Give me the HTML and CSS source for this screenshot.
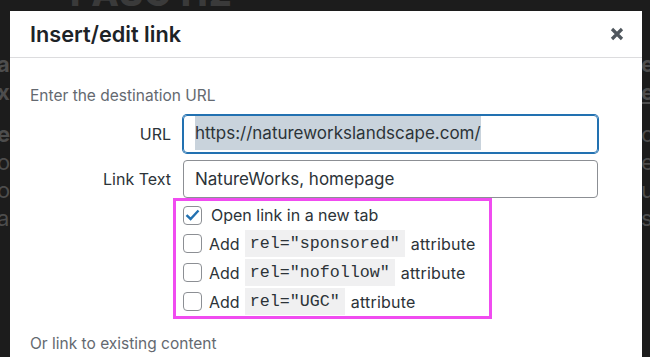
FILE: index.html
```html
<!DOCTYPE html>
<html lang="en">
<head>
  <meta charset="UTF-8">
  <meta name="viewport" content="width=device-width, initial-scale=1.0">
  <title>Insert/edit link</title>
  <link rel="stylesheet" href="styles.css">
</head>
<body>
  <!-- page behind the modal, dimmed -->
  <div class="backdrop">
    <div class="bg-top"><div class="bg-heading">PASC H2</div></div>
    <div class="bg-left">
      <span class="bold">a</span>
      <span class="bold">xt</span>
      <span class="bold gap">e</span>
      <span>o</span>
      <span>o</span>
      <span>a</span>
    </div>
    <div class="bg-right">
      <span class="bold">e</span>
      <span class="bold under">e</span>
      <span class="gap">o</span>
      <span>el</span>
      <span>ui</span>
      <span>s</span>
    </div>
  </div>

  <div class="dialog">
    <div class="dialog-header">
      <h1>Insert/edit link</h1>
      <button class="close" aria-label="Close">
        <svg width="14" height="14" viewBox="0 0 14 14"><path d="M2 2 L12 12 M12 2 L2 12" stroke="#50575e" stroke-width="3.2" stroke-linecap="butt"/></svg>
      </button>
    </div>
    <div class="dialog-body">
      <p class="howto">Enter the destination URL</p>
      <div class="link-form">
        <label class="field-label">URL</label>
        <div class="field focused"><span class="selected">https://natureworkslandscape.com/</span></div>
        <label class="field-label">Link Text</label>
        <div class="field">NatureWorks, homepage</div>
      </div>
      <div class="link-options">
        <div class="option">
          <span class="checkbox checked">
            <svg width="15" height="12" viewBox="0 0 15 12"><path d="M1.5 6.2 L5.6 10 L13.5 1.5" fill="none" stroke="#2271b1" stroke-width="2.4"/></svg>
          </span>
          <span class="option-text first">Open link in a new tab</span>
        </div>
        <div class="option">
          <span class="checkbox"></span>
          <span class="option-text">Add</span><code>rel="sponsored"</code><span class="option-text">attribute</span>
        </div>
        <div class="option">
          <span class="checkbox"></span>
          <span class="option-text">Add</span><code>rel="nofollow"</code><span class="option-text">attribute</span>
        </div>
        <div class="option">
          <span class="checkbox"></span>
          <span class="option-text">Add</span><code>rel="UGC"</code><span class="option-text">attribute</span>
        </div>
      </div>
      <p class="howto existing">Or link to existing content</p>
    </div>
  </div>
</body>
</html>
```

FILE: styles.css
```css
body {
  margin: 0;
  height: 357px;
  overflow: hidden;
  background-color: #1c1c1c;
  font-family: Inter, "Liberation Sans", sans-serif;
  position: relative;
  padding: 11px 0 0 10px;
  box-sizing: border-box;
}
.backdrop {
  position: absolute;
  inset: 0;
  color: #4d4d4d;
  font-size: 22px;
}
.bg-top {
  position: absolute;
  left: 70px;
  top: 0;
  height: 11px;
  overflow: hidden;
}
.bg-heading {
  margin-top: -25px;
  font-size: 36px;
  line-height: 36px;
  font-weight: 800;
  color: #3a3a3a;
  letter-spacing: 1px;
}
.bg-left,
.bg-right {
  position: absolute;
  top: 50px;
  display: flex;
  flex-direction: column;
  line-height: 28px;
}
.bg-left {
  left: -3px;
}
.bg-right {
  left: 641px;
}
.bold {
  font-weight: 700;
}
.under {
  text-decoration: underline;
}
.gap {
  margin-top: 14px;
}
.dialog {
  position: relative;
  width: 632px;
  height: 360px;
  background-color: #ffffff;
}
.dialog-header {
  height: 46px;
  padding: 0 20px;
  display: flex;
  align-items: center;
  justify-content: space-between;
  border-bottom: 1px solid #dcdcde;
}
.dialog-header h1 {
  margin: 0;
  font-size: 21.7px;
  font-weight: 600;
  color: #1d2327;
}
.close {
  border: none;
  background: none;
  padding: 0;
  margin-right: -2px;
  display: flex;
}
.dialog-body {
  padding: 28px 20px 0;
}
.howto {
  margin: 0;
  font-size: 15.5px;
  line-height: 20px;
  color: #646970;
}
.link-form {
  display: grid;
  grid-template-columns: 141px 415px;
  column-gap: 12px;
  row-gap: 7px;
  margin-top: 9px;
}
.field-label {
  display: flex;
  align-items: center;
  justify-content: flex-end;
  font-size: 16px;
  color: #2c3338;
}
.field {
  height: 38px;
  box-sizing: border-box;
  border: 1px solid #8c8f94;
  border-radius: 4px;
  padding: 0 11px;
  font-size: 17px;
  line-height: 36px;
  color: #2c3338;
  white-space: nowrap;
}
.field.focused {
  border-color: #2271b1;
  box-shadow: 0 0 0 1px #2271b1;
}
.selected {
  display: inline-block;
  background-color: #c9d3dc;
  line-height: 34px;
  vertical-align: top;
}
.link-options {
  width: 319px;
  box-sizing: border-box;
  margin: 0 0 0 143px;
  border: 3px solid #f04cf0;
  padding: 0 7px;
}
.option {
  height: 29px;
  display: flex;
  align-items: center;
  font-size: 16px;
  color: #2c3338;
}
.option:first-child {
  height: 28px;
}
.checkbox {
  width: 19px;
  height: 19px;
  box-sizing: border-box;
  border: 1px solid #8c8f94;
  border-radius: 4px;
  margin-right: 7px;
  display: flex;
  align-items: center;
  justify-content: center;
  flex-shrink: 0;
}
.option-text.first {
  margin-left: 2px;
}
.option code {
  font-family: "Liberation Mono", "DejaVu Sans Mono", monospace;
  font-size: 16.7px;
  background-color: #f0f0f1;
  padding: 4px 5px;
  margin: 0 6px 0 5px;
  color: #2c3338;
}
.option-text + code + .option-text {
  letter-spacing: 0.2px;
}
.existing {
  margin-top: 15px;
}
```
